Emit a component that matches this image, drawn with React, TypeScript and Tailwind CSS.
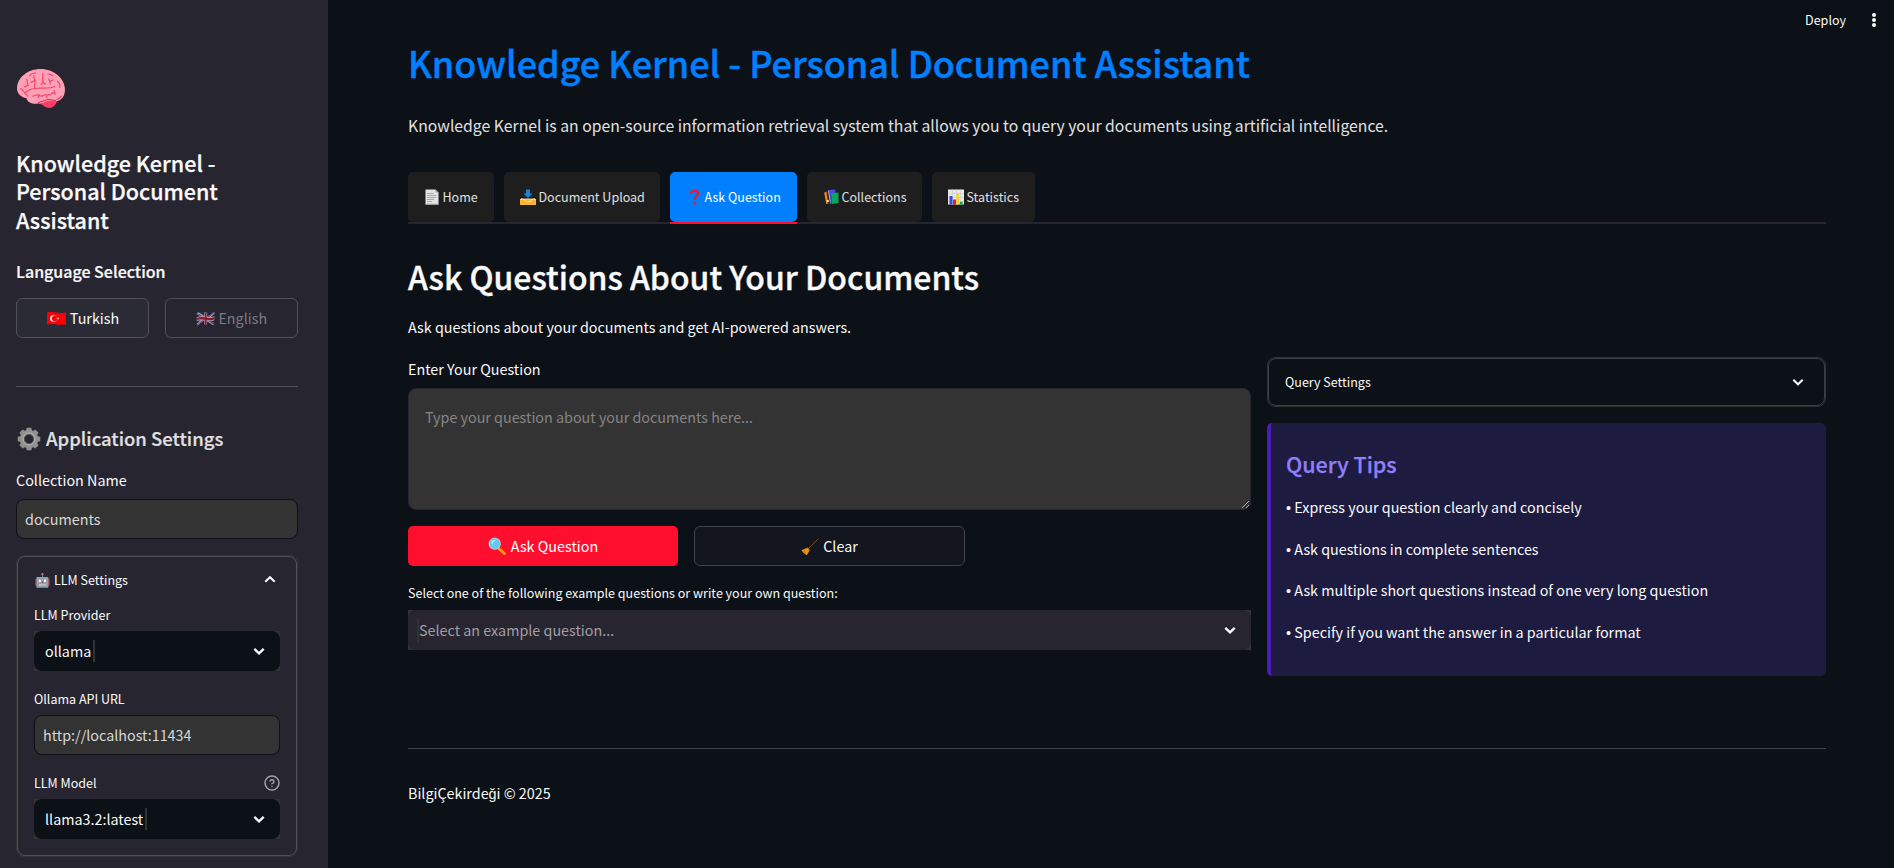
import type { ReactNode } from "react";

function Emoji({ children, className = "" }: { children: ReactNode; className?: string }) {
  return (
    <span className={`inline-block font-['Noto_Color_Emoji'] font-normal leading-[0] whitespace-nowrap ${className}`}>
      {children}
    </span>
  );
}

function BrainIcon() {
  return (
    <svg viewBox="20 27 145 118" className="ml-[1px] h-[39px] w-[48px]" fill="none" strokeLinecap="round">
      <path d="M82 130c8-10 22-10 30-10h28c2 12-10 25-22 25-14 0-20-12-36-15z" fill="#fb3d67" />
      <path d="M92 27c38 0 73 28 73 62 0 20-10 34-28 36-12-3-22-3-33 2-14 6-40 8-50-2-4-4-5-8-6-10-16-2-28-14-28-29C20 53 52 27 92 27z" fill="#ffa0b4" />
      <path d="M84 129c10-4 16-5 26-9 12-2 20 2 27 3" stroke="#d81b45" strokeWidth="3" />
      <g stroke="#f5426c" strokeWidth="3.5">
        <path d="M49 58c4 8 0 14 5 19M42 81l10-4M62 67l14-6M71 47c-2 8 6 12 3 22-2 8-1 12 0 16M58 48c4-8 10-8 18-9M98 41c2 10-3 12 0 20 2 8-2 12-6 12M98 66l8 7M116 57c2 6 6 8 4 16M120 65l8-5M113 42c8 0 12 2 16 6M142 64c8 6 9 12 7 19M30 86c3 2 8 2 9 8M38 92c6 10 12 14 15 17M46 98c14-14 30-12 42-13 16-1 30 2 46-5M68 109c8 0 12-8 20-2 8 6 12-2 18-2 8 0 10 4 18-3l10-5M88 105l-3 9M108 105l3 8M132 92l3 12M141 119c6-2 10-5 13-10" />
      </g>
    </svg>
  );
}

function TurkishFlag() {
  return (
    <svg viewBox="0 0 19 13" className="mr-[4px] ml-px inline-block h-[13px] w-[19px] align-[-1px]">
      <path d="M0 .6C3-.2 6 0 9.500.600S16 1 19 .4V12.400c-3 .6-6 .6-9.500 0S3 12 0 12.600z" fill="#fb0007" />
      <circle cx="6.500" cy="6.500" r="3.300" fill="#fff" />
      <circle cx="7.500" cy="6.500" r="2.700" fill="#fb0007" />
      <path d="m9.600 6.500 2-.9v1.800z" fill="#fff" />
    </svg>
  );
}

function GearIcon() {
  const teeth = [0, 45, 90, 135, 180, 225, 270, 315];
  return (
    <svg viewBox="-12 -12 24 24" className="mr-[5px] inline-block h-6 w-6 align-[-5px]">
      {teeth.map((a) => (
        <path key={a} d="M-3-8-2.300-11.300H2.300L3-8z" fill="#8f8f8f" transform={`rotate(${a})`} />
      ))}
      <circle r="7" fill="none" stroke="#929292" strokeWidth="4.500" />
      <circle r="6" fill="none" stroke="#b4b4b4" strokeWidth="1" />
      <circle r="4.600" fill="none" stroke="#555" strokeWidth="1" />
    </svg>
  );
}

function PageIcon() {
  return (
    <svg viewBox="0 0 16 16" className="h-4 w-4">
      <path d="M1.500.5h10L14.500 3.500V15.500h-13z" fill="#e4e4e4" />
      <path d="M11.500.5v3h3z" fill="#9b9b9b" />
      <path d="M3 4.500h7M3 6.500h9.500M3 8.500h9.500M3 10.500h7M3 12.500h5" stroke="#a0a0a0" strokeWidth=".9" />
      <path d="M1.500 15h13" stroke="#bdbdbd" />
    </svg>
  );
}

function InboxIcon() {
  return (
    <svg viewBox="0 0 16 16" className="h-4 w-4">
      <path d="M2 9.500h12l2 2H0z" fill="#d9c9a8" />
      <path d="M0 10.500 1.500 9l3 2h7l3-2 1.500 1.500V16H0z" fill="#fdb431" />
      <path d="M0 10.500h4.500l1 2h5l1-2H16" fill="none" stroke="#ffe2a4" strokeWidth=".8" />
      <path d="M6 .5h4v4h2.500L8 9 3.500 4.500H6z" fill="#1584e0" />
    </svg>
  );
}

function QuestionIcon() {
  return (
    <svg viewBox="0 0 16 16" className="h-4 w-4">
      <path d="M4.900 4.800C5.200 2.400 6.700 1.700 8.500 1.700c2.200 0 3.500 1.200 3.500 3 0 2.500-3.300 2.800-3.300 6.100" fill="none" stroke="#f5142f" strokeWidth="2.300" />
      <circle cx="8.500" cy="14" r="1.600" fill="#f5142f" />
    </svg>
  );
}

function BooksIcon() {
  return (
    <svg viewBox="0 0 16 16" className="h-4 w-4">
      <path d="m1.200 3.500 3-1 1.500 12-2.500.5z" fill="#f08a1c" />
      <path d="m3.500 3 2.500-.5 1.500 12-2.500 1z" fill="#3b2b2b" />
      <path d="M5.500 1 12 .5l1 4-3 10-3 .5z" fill="#4a4be0" />
      <path d="m5.500 1-.5 1 2.300 12.500.5-2z" fill="#c9cbe8" />
      <path d="M8 4.500 15.500 3.500v10.500l-6.500 1z" fill="#0ba560" />
      <path d="m8 4.500-.5 9.500 1.500 1z" fill="#0a6b3f" />
      <path d="m3.800 11 1.700-.3.300 2-1.700.3z" fill="#fff" />
    </svg>
  );
}

function ChartIcon() {
  return (
    <svg viewBox="0 0 16 16" className="h-4 w-4">
      <path d="M0 .5h16v15H0z" fill="#e9e9e9" />
      <path d="M0 4.500h16M0 8.500h16M0 12.500h16M4.500.5v15M8.500.5v15M12.500.5v15" stroke="#cfcfcf" strokeWidth=".6" />
      <path d="M1.500 7h3v8.500h-3z" fill="#3b48dc" />
      <path d="M5 10.500h3v5H5z" fill="#f21b1b" />
      <path d="M8.700 4.500h2.500v11H8.700z" fill="#f7d60d" />
      <path d="M11.800 12.800h2.900v2.700h-2.900z" fill="#11a558" />
    </svg>
  );
}

function MagnifierIcon() {
  return (
    <svg viewBox="0 0 19 18" className="mr-[4px] inline-block h-[18px] w-[19px] align-[-3px]">
      <path d="m10.800 11.500 5.500 5" stroke="#f59a14" strokeWidth="3" strokeLinecap="round" />
      <circle cx="6.700" cy="6.700" r="5.600" fill="#5fcbf7" stroke="#b9bec8" strokeWidth="1.100" />
      <path d="M3 6a4 4 0 0 1 5-3.200C6 4 5 5 4.600 7.500z" fill="#b5eaff" />
    </svg>
  );
}

function BroomIcon() {
  return (
    <svg viewBox="0 0 18 18" className="mr-[4px] inline-block h-[18px] w-[18px] align-[-4px]">
      <path d="M17.300.7 7 11" stroke="#7a4a12" strokeWidth="1" />
      <path d="M6.500 9.500 8.700 11.700C8 13.500 7 15.500 5.500 17.200 3.500 16 1.500 14 .5 12.300c2-.8 4-1.600 6-2.800z" fill="#e8960c" />
      <path d="m6 10 2.200 2.200M3 12.500l2 3" stroke="#a8650a" strokeWidth=".7" />
    </svg>
  );
}

function Chevron({ up = false, bold = false }: { up?: boolean; bold?: boolean }) {
  return (
    <svg viewBox="0 0 20 20" className="h-5 w-5" fill="none" stroke="#fafafa" strokeWidth={bold ? 2.4 : 2}>
      <path d={up ? "M5.300 11.800 10 7.200l4.700 4.600" : "M5.300 7.800 10 12.300 14.700 7.800"} />
    </svg>
  );
}

function Select({ value }: { value: string }) {
  return (
    <div className="bg-[#333333]">
      <div className="flex h-10 items-center rounded-lg bg-[#0c1017] px-[11px] text-[14.33px] text-[#fafafa]">
        <span>{value}</span>
        <span className="ml-[2px] h-[22px] w-[2px] bg-[#333333]" />
        <span className="ml-auto">
          <Chevron bold />
        </span>
      </div>
    </div>
  );
}

function TextInput({ value }: { value: string }) {
  return (
    <div className="flex h-10 items-center rounded-lg border border-[#0c1017] bg-[#333333] px-2 text-[14.33px] text-[#d8d8d8]">
      {value}
    </div>
  );
}

function Sidebar() {
  return (
    <aside className="h-full w-[328px] shrink-0 bg-[#272530] pt-[69px] pr-[30px] pl-4 text-[#fafafa]">
      <BrainIcon />
      <h3 className="mt-[40.5px] text-[21.5px] leading-[28.8px] font-medium [-webkit-text-stroke:0.25px]">
        Knowledge Kernel -<br />
        Personal Document
        <br />
        Assistant
      </h3>
      <h4 className="mt-[25.1px] text-[16px] leading-[22px] font-medium [-webkit-text-stroke:0.2px]">Language Selection</h4>
      <div className="mt-4 flex gap-4 text-[14.33px]">
        <button className="h-10 flex-1 rounded-md border border-[#52515b] bg-[#2b2b36]">
          <TurkishFlag />
          Turkish
        </button>
        <button className="h-10 flex-1 rounded-md border border-[#52515b] text-[#7c7b83]">
          <Emoji className="text-[15.5px] opacity-60">🇬🇧</Emoji> English
        </button>
      </div>
      <div className="mt-12 h-px bg-[#52515a]" />
      <h3 className="mt-[38px] h-[26px] pl-px text-[18.5px] leading-[26px] font-medium whitespace-nowrap text-[#e0e0e0] [-webkit-text-stroke:0.2px]">
        <GearIcon />
        Application Settings
      </h3>
      <p className="mt-[17px] text-[14.33px] leading-6">Collection Name</p>
      <div className="mt-[7px]">
        <TextInput value="documents" />
      </div>
      <div className="mt-4 rounded-lg border border-[#333237]">
        <div className="rounded-lg border border-[#52515a] px-4 pt-[13px] pb-4 text-[12.53px] leading-5">
          <div className="flex h-5 justify-between">
            <span>
              <Emoji className="w-[17.2px] text-[13.5px]">🤖</Emoji> LLM Settings
            </span>
            <Chevron up />
          </div>
          <p className="mt-[15px] mb-[6px]">LLM Provider</p>
          <Select value="ollama" />
          <p className="mt-[18px] mb-[6px]">Ollama API URL</p>
          <TextInput value="http://localhost:11434" />
          <div className="mt-[18px] mb-[6px] flex h-5 items-center justify-between">
            <p>LLM Model</p>
            <svg viewBox="0 0 24 24" fill="none" stroke="#a3a2a8" strokeWidth="2.2" strokeLinecap="round" className="h-4 w-4">
              <circle cx="12" cy="12" r="10.5" />
              <path d="M9.09 9a3 3 0 0 1 5.83 1c0 2-3 3-3 3M12 17h.01" />
            </svg>
          </div>
          <Select value="llama3.2:latest" />
        </div>
      </div>
    </aside>
  );
}

const tabs = [
  { icon: <PageIcon />, label: "Home", width: "w-[86px]" },
  { icon: <InboxIcon />, label: "Document Upload", width: "w-[156px]" },
  { icon: <QuestionIcon />, label: "Ask Question", width: "w-[127px]", active: true },
  { icon: <BooksIcon />, label: "Collections", width: "w-[115px]" },
  { icon: <ChartIcon />, label: "Statistics", width: "w-[103px]" },
];

const tips = [
  "Express your question clearly and concisely",
  "Ask questions in complete sentences",
  "Ask multiple short questions instead of one very long question",
  "Specify if you want the answer in a particular format",
];

export default function App() {
  return (
    <div className="flex h-[868px] overflow-hidden bg-[#0c1017] font-['Noto_Sans_CJK_SC','Noto_Color_Emoji',sans-serif] text-[14.33px] text-[#fafafa]">
      <Sidebar />
      <div className="min-w-0 flex-1">
        <header className="flex h-[38px] items-center justify-end pr-4 text-[12.53px]">
          <span className="mt-[2px] mr-6 leading-5">Deploy</span>
          <svg viewBox="0 0 8 16" className="mt-[2px] h-4 w-2 fill-[#fafafa]">
            <circle cx="4" cy="3" r="2" />
            <circle cx="4" cy="8" r="2" />
            <circle cx="4" cy="13" r="2" />
          </svg>
        </header>
        <main className="pr-[68px] pl-20">
          <h1 className="text-[35.95px] leading-[48px] font-medium whitespace-nowrap text-[#0080ff] [-webkit-text-stroke:0.4px]">
            Knowledge Kernel - Personal Document Assistant
          </h1>
          <p className="mt-[26px] text-[15.75px] leading-7 text-[#e0e0e0]">
            Knowledge Kernel is an open-source information retrieval system that allows you to query your documents using
            artificial intelligence.
          </p>
          <nav className="mt-8 flex gap-[10px] border-b-2 border-[#272530] text-[12.53px]">
            {tabs.map((t) => (
              <div
                key={t.label}
                className={`${t.width} relative flex h-[50px] items-center gap-[3px] rounded-[5px] pl-[15.5px] whitespace-nowrap ${
                  t.active ? "bg-[#0080ff] text-white" : "bg-[#1e1e1e] text-[#e0e0e0]"
                }`}
              >
                {t.icon}
                <span>{t.label}</span>
                {t.active && <span className="absolute inset-x-0 -bottom-[2px] h-[2px] bg-[#ff0f2d]" />}
              </div>
            ))}
          </nav>
          <h2 className="mt-[30px] text-[31.95px] leading-[44px] font-medium [-webkit-text-stroke:0.35px]">
            Ask Questions About Your Documents
          </h2>
          <p className="mt-4 leading-[26px]">Ask questions about your documents and get AI-powered answers.</p>
          <div className="mt-[17px] flex gap-4">
            <section className="w-[843px]">
              <p className="leading-6">Enter Your Question</p>
              <div className="relative mt-[7px] h-[122px] rounded-lg border border-[#272530] bg-[#333333] px-4 pt-4 leading-6 text-[#858585]">
                Type your question about your documents here...
                <svg viewBox="0 0 10 10" className="absolute right-0 bottom-0 h-[10px] w-[10px] stroke-[#c0c0c0]" fill="none">
                  <path d="M2 9 9 2M6 9 9 6" strokeWidth=".8" />
                </svg>
              </div>
              <div className="mt-4 flex gap-4">
                <button className="h-10 w-[270px] rounded-[5px] bg-[#ff0f2d] text-white">
                  <MagnifierIcon />
                  Ask Question
                </button>
                <button className="h-10 w-[271px] rounded-md border border-[#41424a] bg-[#13151f]">
                  <BroomIcon />
                  Clear
                </button>
              </div>
              <p className="mt-[17px] text-[12.53px] leading-5">
                Select one of the following example questions or write your own question:
              </p>
              <div className="mt-[7px] bg-[#333333]">
                <div className="flex h-10 items-center rounded-lg bg-[#272530] pr-[11px] pl-[9px] text-[#a09fa4]">
                  <span className="h-[23px] w-[2px] bg-[#333333]" />
                  <span>Select an example question...</span>
                  <span className="ml-auto">
                    <Chevron bold />
                  </span>
                </div>
              </div>
            </section>
            <section className="flex-1">
              <div className="rounded-lg border border-[#333333]">
                <div className="flex h-12 items-center justify-between rounded-lg border border-[#3d3e43] px-4 text-[12.53px]">
                  <span>Query Settings</span>
                  <Chevron />
                </div>
              </div>
              <div className="mt-4 h-[253px] rounded-[5px] border-l-4 border-[#4b1cb8] bg-[#1d1b40] pt-[26px] pl-[15px]">
                <h3 className="text-[21.5px] leading-[29px] font-medium text-[#917ff8] [-webkit-text-stroke:0.25px]">
                  Query Tips
                </h3>
                <div className="mt-4">
                  {tips.map((tip) => (
                    <p key={tip} className="mb-4 flex h-[25.6px] leading-[25.6px]">
                      <span className="w-[8.3px] pt-[2px] font-['Liberation_Sans']">•</span>
                      <span>{tip}</span>
                    </p>
                  ))}
                </div>
              </div>
            </section>
          </div>
          <div className="mt-[72px] h-px bg-[#3f4046]" />
          <footer className="mt-[31px] leading-[26px]">BilgiÇekirdeği © 2025</footer>
        </main>
      </div>
    </div>
  );
}
